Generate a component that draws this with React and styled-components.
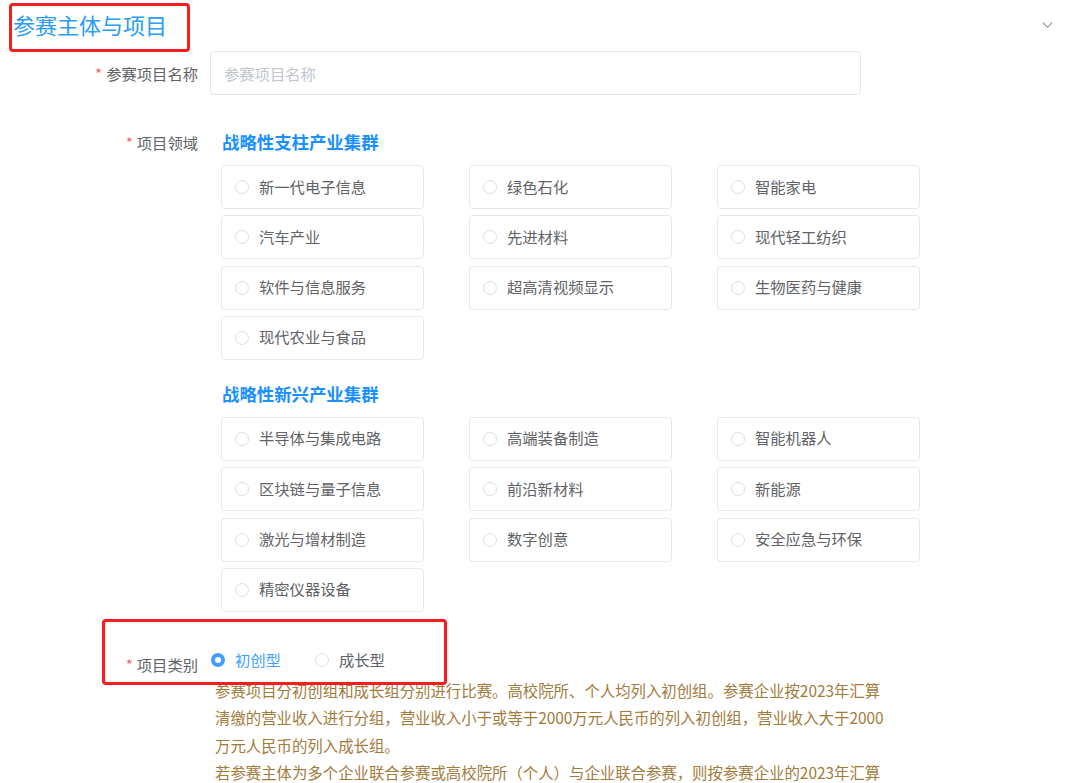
import React from "react";
import styled, { createGlobalStyle } from "styled-components";

const GlobalStyle = createGlobalStyle`
  body {
    margin: 0;
    background: #fff;
    font-family: "Noto Sans CJK SC", "Noto Sans", sans-serif;
  }
`;

const pillarGroup = [
  "新一代电子信息",
  "绿色石化",
  "智能家电",
  "汽车产业",
  "先进材料",
  "现代轻工纺织",
  "软件与信息服务",
  "超高清视频显示",
  "生物医药与健康",
  "现代农业与食品",
];

const emergingGroup = [
  "半导体与集成电路",
  "高端装备制造",
  "智能机器人",
  "区块链与量子信息",
  "前沿新材料",
  "新能源",
  "激光与增材制造",
  "数字创意",
  "安全应急与环保",
  "精密仪器设备",
];

const App = () => {
  return (
    <Page>
      <GlobalStyle />
      <Header>
        <TitleBox>参赛主体与项目</TitleBox>
        <Chevron viewBox="0 0 12 8">
          <path d="M1 1.5 L6 6.5 L11 1.5" />
        </Chevron>
      </Header>

      <FormItem>
        <Label>
          <Star>*</Star>参赛项目名称
        </Label>
        <Input placeholder="参赛项目名称" />
      </FormItem>

      <FormItem top="33px">
        <Label lh="28px">
          <Star>*</Star>项目领域
        </Label>
        <FieldBody>
          <GroupTitle>战略性支柱产业集群</GroupTitle>
          <OptionGrid>
            {pillarGroup.map((name) => (
              <OptionCard key={name}>
                <Circle />
                {name}
              </OptionCard>
            ))}
          </OptionGrid>
          <GroupTitle top="20px">战略性新兴产业集群</GroupTitle>
          <OptionGrid>
            {emergingGroup.map((name) => (
              <OptionCard key={name}>
                <Circle />
                {name}
              </OptionCard>
            ))}
          </OptionGrid>
        </FieldBody>
      </FormItem>

      <FormItem top="34px">
        <Marker />
        <Label lh="28px" pad="4px">
          <Star>*</Star>项目类别
        </Label>
        <TypeBody>
          <RadioRow>
            <Radio active>
              <Circle active />
              初创型
            </Radio>
            <Radio>
              <Circle />
              成长型
            </Radio>
          </RadioRow>
          <Note>
            参赛项目分初创组和成长组分别进行比赛。高校院所、个人均列入初创组。参赛企业按2023年汇算
            <br />
            清缴的营业收入进行分组，营业收入小于或等于2000万元人民币的列入初创组，营业收入大于2000
            <br />
            万元人民币的列入成长组。
            <br />
            若参赛主体为多个企业联合参赛或高校院所（个人）与企业联合参赛，则按参赛企业的2023年汇算
          </Note>
        </TypeBody>
      </FormItem>
    </Page>
  );
};

export default App;

const Page = styled.div`
  width: 1080px;
  height: 783px;
  overflow: hidden;
  padding-top: 3px;
  box-sizing: border-box;
`;

const Header = styled.div`
  display: flex;
  align-items: flex-start;
  justify-content: space-between;
  padding-left: 9px;
  padding-right: 27px;
  height: 48px;
`;

const TitleBox = styled.div`
  width: 181px;
  height: 49px;
  box-sizing: border-box;
  border: 3px solid #f51d1d;
  border-radius: 4px;
  padding-left: 1px;
  font-size: 22px;
  line-height: 36px;
  color: #2a9cf3;
  white-space: nowrap;
`;

const Chevron = styled.svg`
  width: 11px;
  height: 8px;
  margin-top: 18px;
  fill: none;
  stroke: #8a8d93;
  stroke-width: 1.2;
`;

const FormItem = styled.div`
  position: relative;
  display: flex;
  align-items: flex-start;
  margin-top: ${(p) => p.top || "0"};
`;

const Label = styled.div`
  width: 210px;
  flex-shrink: 0;
  box-sizing: border-box;
  padding-right: 12px;
  padding-top: ${(p) => p.pad || "0"};
  text-align: right;
  font-size: 15.3px;
  line-height: ${(p) => p.lh || "44px"};
  color: #606266;
`;

const Star = styled.span`
  color: #f56c6c;
  margin-right: 4px;
`;

const Input = styled.input`
  width: 651px;
  height: 44px;
  box-sizing: border-box;
  border: 1px solid #e4e7ed;
  border-radius: 4px;
  padding: 0 13px;
  font-family: inherit;
  font-size: 15.3px;
  color: #606266;
  outline: none;
  &::placeholder {
    color: #c0c4cc;
  }
`;

const FieldBody = styled.div`
  padding-left: 11px;
`;

const GroupTitle = styled.div`
  margin-top: ${(p) => p.top || "0"};
  margin-bottom: 9px;
  font-size: 17.4px;
  font-weight: 700;
  line-height: 28px;
  color: #1890ff;
  padding-left: 1px;
`;

const OptionGrid = styled.div`
  display: grid;
  grid-template-columns: repeat(3, 203px);
  column-gap: 45px;
  grid-auto-rows: 44px;
  row-gap: 6.33px;
`;

const OptionCard = styled.div`
  display: flex;
  align-items: center;
  gap: 10px;
  box-sizing: border-box;
  padding-left: 13px;
  padding-bottom: 3px;
  border: 1px solid #e6e8ec;
  border-radius: 4px;
  font-size: 15.3px;
  color: #606266;
  white-space: nowrap;
`;

const Circle = styled.span`
  width: 14px;
  height: 14px;
  margin-top: 3px;
  box-sizing: border-box;
  border-radius: 50%;
  flex-shrink: 0;
  border: ${(p) => (p.active ? "4px solid #409eff" : "1px solid #dcdfe6")};
  background: #fff;
`;

const TypeBody = styled.div`
  padding-left: 1px;
`;

const RadioRow = styled.div`
  display: flex;
  align-items: center;
  gap: 34px;
  height: 28px;
  padding-bottom: 2px;
  box-sizing: border-box;
`;

const Radio = styled.div`
  display: flex;
  align-items: center;
  gap: 10px;
  font-size: 15.3px;
  color: ${(p) => (p.active ? "#409eff" : "#606266")};
`;

const Note = styled.p`
  margin: 3px 0 0 4px;
  font-size: 15.4px;
  line-height: 27.5px;
  color: #a27a3a;
  white-space: nowrap;
`;

const Marker = styled.div`
  position: absolute;
  left: 102px;
  top: -27px;
  width: 345px;
  height: 66px;
  box-sizing: border-box;
  border: 3px solid #f51d1d;
  border-radius: 4px;
  pointer-events: none;
`;
